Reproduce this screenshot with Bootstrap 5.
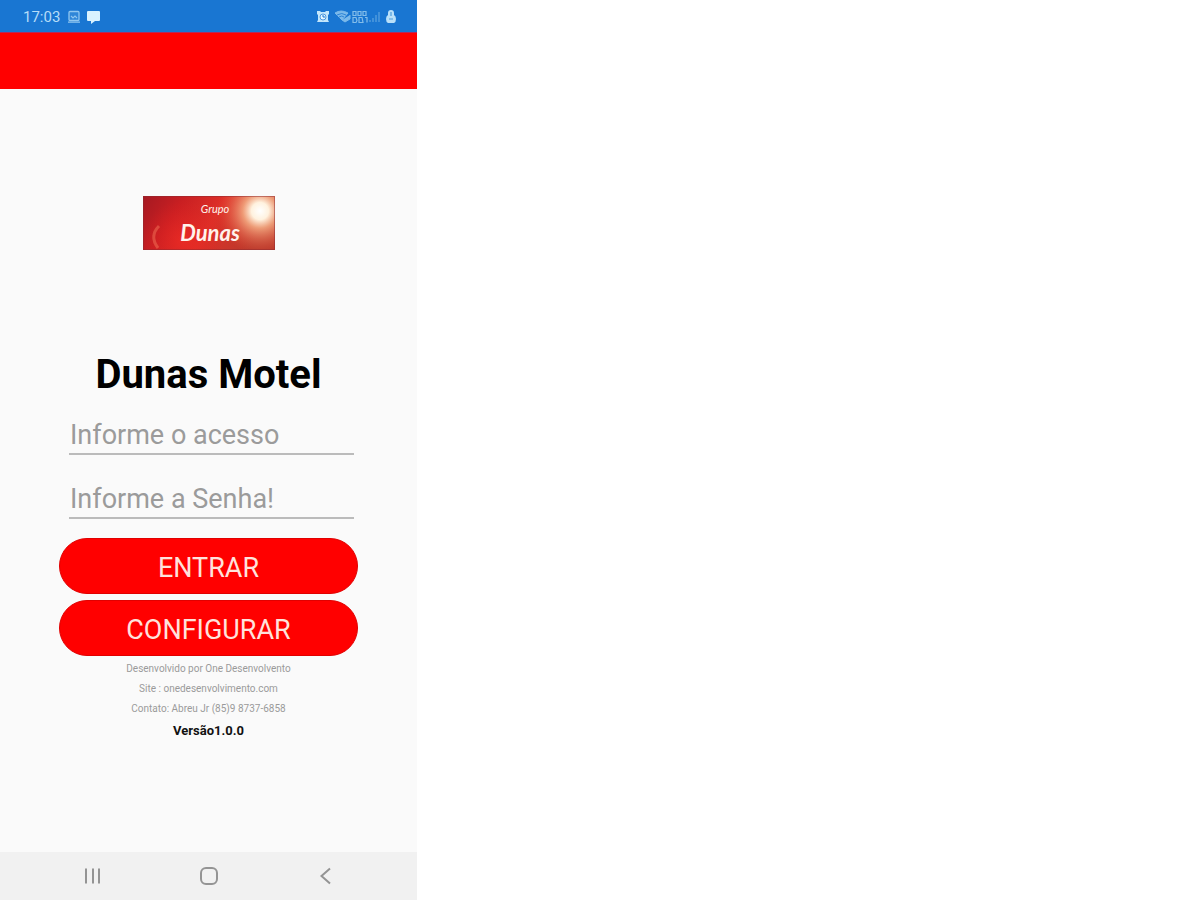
<!DOCTYPE html>
<html lang="pt-BR">
<head>
<meta charset="utf-8">
<meta name="viewport" content="width=device-width, initial-scale=1">
<title>Dunas Motel</title>
<link href="https://cdn.jsdelivr.net/npm/bootstrap@5.3.0/dist/css/bootstrap.min.css" rel="stylesheet">
<style>
  body { font-family: Roboto, "Liberation Sans", sans-serif; background: #fff; color: #000; }
  .phone { width: 100%; max-width: 417px; background: #fafafa; }
  .status-bar { background: #1976d2; color: #b5dcf8; height: 32px; padding: 2px 20px 0 23px; font-size: 15px; line-height: 30px; }
  .app-bar { background: #f00; height: 57px; border-top: 1px solid #b4285a; }
  .screen { padding: 107px 59px 0; }
  .brand-logo { width: 132px; height: 54px; }
  .screen h1 { font-size: 40px; line-height: 48px; font-weight: 700; margin: 101px 0 0; }
  .login-form { margin-top: 11px; }
  .field { margin: 0 4px 19px 10px; }
  .field .form-control { height: 45px; padding: 7px 0 0 1px; border: 0; border-bottom: 2px solid #bbb; border-radius: 0; background: transparent; font-size: 27px; line-height: 36px; box-shadow: none; }
  .field .form-control::placeholder { color: #9b9b9b; opacity: 1; }
  .field .form-control:focus { border-color: #f00; }
  .btn-red { --bs-btn-color: #ffe2dc; --bs-btn-bg: #f00; --bs-btn-border-color: #e00000; --bs-btn-hover-color: #fff; --bs-btn-hover-bg: #d90000; --bs-btn-active-bg: #c00000; --bs-btn-active-color: #fff; height: 56px; padding: 3px 0 0; font-size: 27px; line-height: 36px; }
  .actions { gap: 6px; }
  .credits { font-size: 10px; line-height: 20px; color: #9a9a9a; margin-top: 3px; }
  .version { font-size: 13px; line-height: 24px; font-weight: 700; color: #111; }
  .system-nav { background: #f1f1f1; height: 48px; padding: 0 34px 0 35px; }
  .system-nav .btn { padding: 0; border: 0; line-height: 0; }
</style>
</head>
<body>
<div class="phone min-vh-100 d-flex flex-column">
  <header>
    <div class="status-bar d-flex align-items-center justify-content-between">
      <div class="d-flex align-items-center gap-2">
        <span>17:03</span>
        <svg width="33" height="14" viewBox="0 0 33 14" aria-hidden="true">
          <rect x="1" y="1.5" width="10" height="9" rx="1" fill="#2f86d8" stroke="#8fc6f0" stroke-width="1.3"/>
          <path d="M3 6l2 2 2-2 2 2M0 12.2h12" fill="none" stroke="#8fc6f0" stroke-width="1.2"/>
          <path d="M20 1h11q1 0 1 1v8q0 1-1 1h-4l-4 3v-3h-3q-1 0-1-1V2q0-1 1-1z" fill="#d9f2ff"/>
        </svg>
      </div>
      <svg width="80" height="16" viewBox="0 0 80 16" aria-hidden="true">
        <path d="M0 2h3l1 1h4l1-1h3v3l-1 1v5l1 2H0l1-2V6L0 5z" fill="#c3e6fb"/>
        <circle cx="6" cy="8" r="3" fill="#e6f7ff" stroke="#1976d2" stroke-width=".7"/>
        <path d="M6 6v2h2" fill="none" stroke="#1976d2"/>
        <path d="M18 4q6-4 13 0l-6 7zM25 11l3 2 5-3V6" fill="#7bb9ea" stroke="#7bb9ea" stroke-width="1"/>
        <path d="M20 6q5-3 9 0M22 8q3-2 5 0" fill="none" stroke="#1976d2" stroke-width=".8"/>
        <path d="M36 2.500v4l3 0v-4zM41 6.500v-4h3v4zM46 2.500v4h3v-4zM36 8.500v5h3l1-2-1-3zM42 8.500h3l1 5h-4zM48 8.500h2v5" fill="none" stroke="#83bdea" stroke-width="1.200"/>
        <path d="M53 13V11M56 13V9M59 13V6M62 13V3" stroke="#4b98dd" stroke-width="1.600"/>
        <path d="M74 1q3 0 3 3v2q2 1 2 4t-2 4h-6q-2-1-2-4t2-4V4q0-3 3-3z" fill="#b9e0f9"/>
        <path d="M74 3v4M72 10h4" stroke="#4f9ddd" stroke-width="1.200"/>
      </svg>
    </div>
    <div class="app-bar"></div>
  </header>

  <main class="screen flex-grow-1 text-center">
    <svg class="brand-logo d-block mx-auto" viewBox="0 0 132 54" role="img" aria-label="Grupo Dunas">
      <defs>
        <linearGradient id="logoRed" x1="0" x2="1" y1="0" y2=".25">
          <stop offset="0" stop-color="#a51922"/><stop offset=".3" stop-color="#c91f22"/><stop offset=".6" stop-color="#de3028"/><stop offset="1" stop-color="#b93a2c"/>
        </linearGradient>
        <radialGradient id="logoSun" gradientUnits="userSpaceOnUse" cx="117" cy="15" r="43">
          <stop offset="0" stop-color="#fff"/><stop offset=".2" stop-color="#fff2df"/><stop offset=".4" stop-color="#f5ad84" stop-opacity=".85"/><stop offset="1" stop-color="#e34a34" stop-opacity="0"/>
        </radialGradient>
        <radialGradient id="logoFlare" gradientUnits="userSpaceOnUse" cx="40" cy="44" r="40">
          <stop offset="0" stop-color="#f02a24" stop-opacity=".7"/><stop offset="1" stop-color="#e02020" stop-opacity="0"/>
        </radialGradient>
      </defs>
      <rect width="132" height="54" fill="url(#logoRed)"/>
      <rect width="132" height="54" fill="url(#logoFlare)"/>
      <rect width="132" height="54" fill="url(#logoSun)"/>
      <path d="M16 30q-10 10-1 22" fill="none" stroke="#f27358" stroke-width="3" opacity=".5"/>
      <rect x=".5" y=".5" width="131" height="53" fill="none" stroke="#8e2a30" opacity=".5"/>
      <g fill="#fff3ec" font-family="Lato, sans-serif" font-style="italic" text-anchor="middle">
        <text x="72" y="17" font-size="11">Grupo</text>
        <text x="67" y="45" font-size="22" font-weight="700">Dunas</text>
      </g>
    </svg>

    <h1>Dunas Motel</h1>

    <form class="login-form">
      <div class="field">
        <label class="visually-hidden" for="acesso">Informe o acesso</label>
        <input class="form-control" id="acesso" type="text" placeholder="Informe o acesso">
      </div>
      <div class="field">
        <label class="visually-hidden" for="senha">Informe a Senha!</label>
        <input class="form-control" id="senha" type="password" placeholder="Informe a Senha!">
      </div>
      <div class="actions d-grid">
        <button class="btn btn-red rounded-pill" type="submit">ENTRAR</button>
        <button class="btn btn-red rounded-pill" type="button">CONFIGURAR</button>
      </div>
    </form>

    <div class="credits">
      <div>Desenvolvido por One Desenvolvento</div>
      <div>Site : onedesenvolvimento.com</div>
      <div>Contato: Abreu Jr (85)9 8737-6858</div>
    </div>
    <div class="version">Versão1.0.0</div>
  </main>

  <nav class="system-nav d-flex align-items-center" aria-label="Sistema">
    <button class="btn flex-fill" type="button" aria-label="Recentes">
      <svg width="18" height="18" viewBox="0 0 18 18"><path d="M2 1.500v15M9 1.500v15M15 1.500v15" stroke="#949494" stroke-width="2"/></svg>
    </button>
    <button class="btn flex-fill" type="button" aria-label="Início">
      <svg width="18" height="18" viewBox="0 0 18 18"><rect x="1" y="1" width="16" height="16" rx="5" fill="none" stroke="#949494" stroke-width="2"/></svg>
    </button>
    <button class="btn flex-fill" type="button" aria-label="Voltar">
      <svg width="18" height="18" viewBox="0 0 18 18"><path d="M14 1.500L5.500 9l8.500 7.500" fill="none" stroke="#949494" stroke-width="2"/></svg>
    </button>
  </nav>
</div>
<script src="https://cdn.jsdelivr.net/npm/bootstrap@5.3.0/dist/js/bootstrap.bundle.min.js"></script>
</body>
</html>
